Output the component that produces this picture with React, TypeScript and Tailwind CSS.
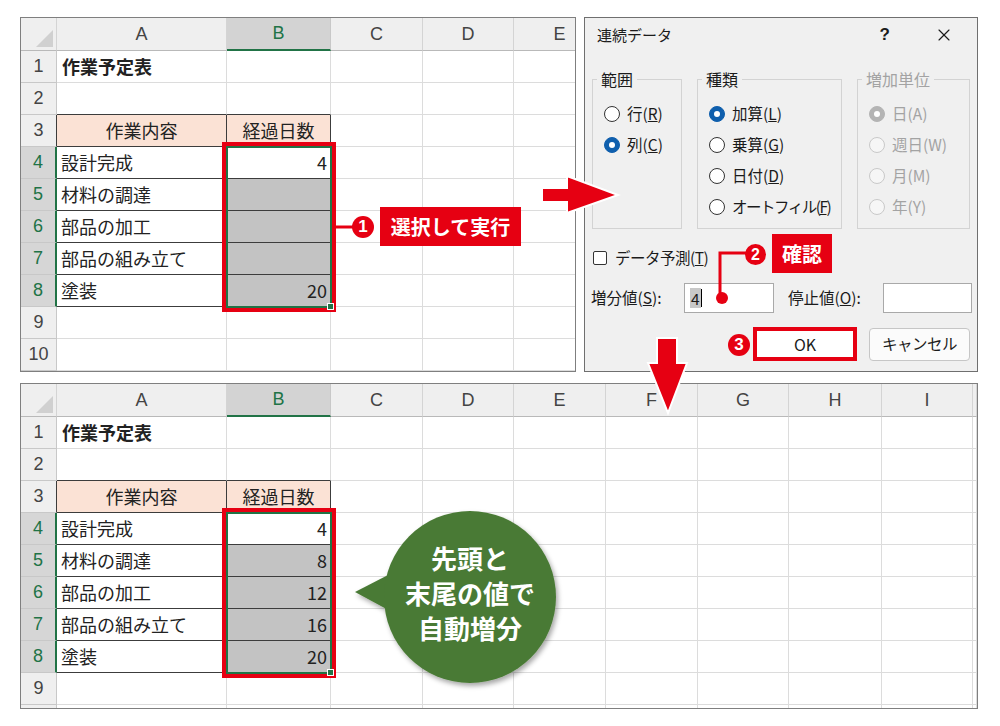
import { X } from "lucide-react";

type Col = { l: string; w: string };

const TOP_COLS: Col[] = [
  { l: "A", w: "w-[170px]" },
  { l: "B", w: "w-[104px]" },
  { l: "C", w: "w-[92px]" },
  { l: "D", w: "w-[91px]" },
  { l: "E", w: "w-[92px]" },
];

const BOTTOM_COLS: Col[] = [
  ...TOP_COLS,
  { l: "F", w: "w-[92px]" },
  { l: "G", w: "w-[91px]" },
  { l: "H", w: "w-[93px]" },
  { l: "I", w: "w-[91px]" },
  { l: "", w: "w-[4px]" },
];

const TASKS: Record<number, string> = {
  4: "設計完成",
  5: "材料の調達",
  6: "部品の加工",
  7: "部品の組み立て",
  8: "塗装",
};

function colHeaderClass(l: string) {
  if (l === "B")
    return "bg-[#d3d3d3] text-[#217346] border-r border-r-[#c8c8c8] border-b-2 border-b-[#217346]";
  return "bg-[#efefef] text-[#444] border-r border-r-[#d4d4d4] border-b border-b-[#b9b9b9]";
}

function rowHeaderClass(r: number) {
  if (r >= 4 && r <= 8)
    return "bg-[#d6d6d6] text-[#217346] border-b border-b-[#c8c8c8] border-r-2 border-r-[#217346]";
  if (r === 3) return "bg-[#efefef] text-[#444] border-b border-b-[#c8c8c8] border-r border-r-[#3c3c3c]";
  return "bg-[#efefef] text-[#444] border-b border-b-[#c8c8c8] border-r border-r-[#c8c8c8]";
}

function cellClass(r: number, ci: number) {
  const inTable = ci <= 1 && r >= 3 && r <= 8;
  let c = "border-r border-b ";
  if (inTable) c += "border-r-[#3c3c3c] border-b-[#3c3c3c] ";
  else if (ci <= 1 && r === 2) c += "border-r-[#dcdcdc] border-b-[#3c3c3c] ";
  else c += "border-r-[#dcdcdc] border-b-[#dcdcdc] ";
  if (inTable && r === 3) c += "bg-[#fbe2d5]";
  else if (ci === 1 && r >= 5 && r <= 8) c += "bg-[#c3c3c3]";
  else c += "bg-white";
  return c;
}

function CellText({ r, ci, days }: { r: number; ci: number; days: string[] }) {
  if (ci === 0 && r === 1) return <span className="pl-[5px] font-bold">作業予定表</span>;
  if (r === 3 && ci === 0) return <span className="w-full text-center">作業内容</span>;
  if (r === 3 && ci === 1) return <span className="w-full text-center">経過日数</span>;
  if (ci === 0 && TASKS[r]) return <span className="pl-[4px]">{TASKS[r]}</span>;
  if (ci === 1 && r >= 4 && r <= 8)
    return <span className="w-full text-right pr-[3px]">{days[r - 4]}</span>;
  return null;
}

function Sheet({
  cols,
  rows,
  days,
  width,
  partial,
}: {
  cols: Col[];
  rows: number;
  days: string[];
  width: string;
  partial?: boolean;
}) {
  const rowNums = Array.from({ length: rows }, (_, i) => i + 1);
  return (
    <div
      className={`relative shrink-0 ${width} border border-[#7f7f7f] bg-white overflow-hidden text-[18px] text-[#222]`}
    >
      <div className="flex h-[33px]">
        <div className="w-[36px] shrink-0 bg-[#efefef] border-r border-b border-r-[#d4d4d4] border-b-[#b9b9b9] flex items-end justify-end pr-[3px] pb-[3px]">
          <svg width="17" height="17" viewBox="0 0 17 17">
            <polygon points="17,0 17,17 0,17" fill="#d0d0d0" />
          </svg>
        </div>
        {cols.map((c) => (
          <div
            key={c.l}
            className={`${c.w} shrink-0 flex items-center justify-center font-['Liberation_Sans',sans-serif] text-[18px] ${colHeaderClass(c.l)}`}
          >
            {c.l}
          </div>
        ))}
      </div>
      {rowNums.map((r) => (
        <div key={r} className="flex h-[32px]">
          <div
            className={`w-[36px] shrink-0 flex items-center justify-center font-['Liberation_Sans',sans-serif] text-[18px] ${rowHeaderClass(r)}`}
          >
            {r}
          </div>
          {cols.map((c, ci) => (
            <div key={c.l} className={`${c.w} shrink-0 flex items-center ${cellClass(r, ci)}`}>
              <CellText r={r} ci={ci} days={days} />
            </div>
          ))}
        </div>
      ))}
      {partial && (
        <div className="flex h-[3px]">
          <div className="w-[36px] shrink-0 bg-[#efefef] border-r border-r-[#c8c8c8]" />
          {cols.map((c) => (
            <div key={c.l} className={`${c.w} shrink-0 border-r border-r-[#dcdcdc]`} />
          ))}
        </div>
      )}
      <div className="absolute left-[201px] top-[124px] w-[114px] h-[170px] border-4 border-[#e60012]" />
      <div className="absolute left-[205px] top-[128px] w-[106px] h-[162px] border-2 border-[#217346]" />
      <div className="absolute left-[306px] top-[285px] w-[7px] h-[7px] bg-[#217346] border border-white" />
    </div>
  );
}

function Radio({
  pre,
  k,
  post = ")",
  checked,
  disabled,
  tight,
}: {
  pre: string;
  k: string;
  post?: string;
  checked?: boolean;
  disabled?: boolean;
  tight?: boolean;
}) {
  let circle = "border border-[#333] bg-white";
  if (checked && !disabled) circle = "bg-[#0f5fad] border border-[#0f5fad]";
  if (checked && disabled) circle = "bg-[#b4b4b4] border border-[#b4b4b4]";
  if (!checked && disabled) circle = "border border-[#c9c9c9] bg-[#f6f6f6]";
  return (
    <div className={`flex items-center h-[31px] pl-[11px] gap-[7px] ${disabled ? "text-[#a3a3a3]" : ""}`}>
      <span className={`w-[16px] h-[16px] rounded-full flex items-center justify-center shrink-0 ${circle}`}>
        {checked && <span className="w-[6px] h-[6px] rounded-full bg-white" />}
      </span>
      <span className={`whitespace-nowrap ${tight ? "tracking-[-1.5px]" : ""}`}>
        {pre}
        {disabled ? k : <u>{k}</u>}
        {post}
      </span>
    </div>
  );
}

function Group({
  legend,
  w,
  dim,
  children,
}: {
  legend: string;
  w: string;
  dim?: boolean;
  children: React.ReactNode;
}) {
  return (
    <fieldset className={`${w} h-[160px] shrink-0 border border-[#d3d3d3] pt-[9px]`}>
      <legend className={`ml-[4px] px-[4px] leading-[20px] text-[16px] ${dim ? "text-[#a3a3a3]" : ""}`}>
        {legend}
      </legend>
      {children}
    </fieldset>
  );
}

function Dialog() {
  return (
    <div className="ml-[8px] w-[394px] h-[355px] shrink-0 border border-[#6f6f6f] bg-[#f0f0f0] text-[15.5px] text-[#1b1b1b] flex flex-col">
      <div className="h-[34px] flex items-center pl-[12px] pr-[23px] shrink-0">
        <span className="text-[15px]">連続データ</span>
        <span className="ml-auto mr-[44px] font-bold text-[17px] font-['Liberation_Sans',sans-serif]">?</span>
        <X size={20} strokeWidth={1.4} />
      </div>
      <div className="flex gap-[15px] pl-[7px] mt-[17px]">
        <Group legend="範囲" w="w-[90px]">
          <Radio pre="行(" k="R" />
          <Radio pre="列(" k="C" checked />
        </Group>
        <Group legend="種類" w="w-[145px]">
          <Radio pre="加算(" k="L" checked />
          <Radio pre="乗算(" k="G" />
          <Radio pre="日付(" k="D" />
          <Radio pre="オートフィル(" k="F" tight />
        </Group>
        <Group legend="増加単位" w="w-[113px]" dim>
          <Radio pre="日(" k="A" checked disabled />
          <Radio pre="週日(" k="W" disabled />
          <Radio pre="月(" k="M" disabled />
          <Radio pre="年(" k="Y" disabled />
        </Group>
      </div>
      <div className="flex items-center h-[24px] mt-[17px] pl-[8px] gap-[8px]">
        <span className="w-[14px] h-[14px] border border-[#333] rounded-[2px] bg-white" />
        <span className="tracking-[-0.5px]">
          データ予測(<u>T</u>)
        </span>
      </div>
      <div className="flex items-center h-[30px] mt-[13px] pl-[6px]">
        <span className="w-[93px] shrink-0">
          増分値(<u>S</u>):
        </span>
        <div className="w-[90px] h-[30px] shrink-0 border border-[#a9a9a9] bg-white flex items-center pl-[5px]">
          <span className="bg-[#c8c8c8] leading-[20px] px-[1px]">4</span>
          <span className="w-[1px] h-[18px] bg-black" />
        </div>
        <span className="w-[95px] shrink-0 ml-[14px]">
          停止値(<u>O</u>):
        </span>
        <div className="w-[89px] h-[30px] shrink-0 border border-[#a9a9a9] bg-white" />
      </div>
      <div className="flex items-center mt-[14px]">
        <button className="ml-[168px] w-[104px] h-[34px] border-4 border-[#e60012] bg-white text-[16px]">
          OK
        </button>
        <button className="ml-[12px] w-[101px] h-[33px] border border-[#c6c6c6] rounded-[4px] bg-[#fbfbfb] text-[15.5px] tracking-[-0.5px]">
          キャンセル
        </button>
      </div>
    </div>
  );
}

function Badge({ n, className }: { n: string; className: string }) {
  return (
    <div
      className={`absolute rounded-full bg-[#e60012] text-white font-bold flex items-center justify-center font-['Liberation_Sans',sans-serif] ${className}`}
    >
      {n}
    </div>
  );
}

function Annotations() {
  return (
    <>
      <svg className="absolute left-0 top-0 pointer-events-none" width="1000" height="726">
        <defs>
          <filter id="sh" x="-20%" y="-20%" width="140%" height="140%">
            <feDropShadow dx="2" dy="3" stdDeviation="2.5" floodColor="#000" floodOpacity="0.35" />
          </filter>
        </defs>
        <line x1="334" y1="227" x2="354" y2="227" stroke="#e60012" strokeWidth="3" />
        <polygon
          points="542,188 567,188 567,176 618,195 567,213 567,202 542,202"
          fill="#e60012"
          stroke="#fff"
          strokeWidth="2"
          strokeLinejoin="miter"
        />
        <polyline points="748,253 720,253 720,296" fill="none" stroke="#e60012" strokeWidth="3" />
        <circle cx="722" cy="298" r="6" fill="#e60012" />
        <polygon
          points="657,338 677,338 677,363 687,363 668,413 648,363 657,363"
          fill="#e60012"
          stroke="#fff"
          strokeWidth="2"
        />
        <g filter="url(#sh)">
          <polygon points="355,592 390,574 392,612" fill="#4a7a35" />
          <circle cx="470" cy="597" r="86" fill="#4a7a35" />
        </g>
      </svg>
      <Badge n="1" className="left-[352px] top-[216px] w-[22px] h-[22px] text-[17px]" />
      <div className="absolute left-[380px] top-[207px] w-[141px] h-[39px] bg-[#e60012] text-white font-bold text-[20px] flex items-center justify-center">
        選択して実行
      </div>
      <Badge n="2" className="left-[745px] top-[244px] w-[21px] h-[21px] text-[16px]" />
      <div className="absolute left-[772px] top-[234px] w-[60px] h-[39px] bg-[#e60012] text-white font-bold text-[20px] flex items-center justify-center">
        確認
      </div>
      <Badge n="3" className="left-[728px] top-[334px] w-[22px] h-[22px] text-[17px]" />
      <div className="absolute left-[384px] top-[540px] w-[172px] text-center text-white font-bold text-[26px] leading-[35px]">
        先頭と
        <br />
        末尾の値で
        <br />
        自動増分
      </div>
    </>
  );
}

export default function App() {
  return (
    <div className="relative w-[1000px] h-[726px] bg-white overflow-hidden font-['Noto_Sans_CJK_JP',sans-serif]">
      <div className="pt-[17px] pl-[20px]">
        <div className="flex">
          <Sheet cols={TOP_COLS} rows={10} days={["4", "", "", "", "20"]} width="w-[556px]" />
          <Dialog />
        </div>
        <div className="mt-[11px]">
          <Sheet
            cols={BOTTOM_COLS}
            rows={9}
            days={["4", "8", "12", "16", "20"]}
            width="w-[958px]"
            partial
          />
        </div>
      </div>
      <Annotations />
    </div>
  );
}
